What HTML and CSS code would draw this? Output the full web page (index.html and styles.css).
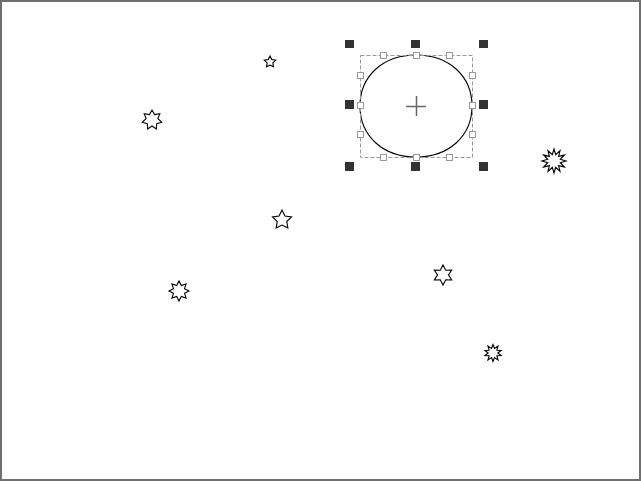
FILE: index.html
```html
<!DOCTYPE html>
<html>
<head>
    <title>Shapes Canvas</title>
    <link rel="stylesheet" href="styles.css">
</head>
<body>
    <div class="canvas-frame">
        <svg class="canvas" id="canvas" width="637" height="477" viewBox="2 2 637 477">
            <!-- selected ellipse -->
            <g class="selection">
                <path class="shape" d="M416 55 C449 55 472 76 472 106 C472 136 449 157 416 157 C383 157 360 136 360 106 C360 76 383 55 416 55 Z"></path>
                <rect class="bounds" x="360.5" y="55.5" width="112" height="102"></rect>
                <g class="point-handles">
                    <rect x="380.5" y="52.5" width="6" height="6"></rect>
                    <rect x="413.5" y="52.5" width="6" height="6"></rect>
                    <rect x="446.5" y="52.5" width="6" height="6"></rect>
                    <rect x="380.5" y="154.5" width="6" height="6"></rect>
                    <rect x="413.5" y="154.5" width="6" height="6"></rect>
                    <rect x="446.5" y="154.5" width="6" height="6"></rect>
                    <rect x="357.5" y="72.5" width="6" height="6"></rect>
                    <rect x="357.5" y="102.5" width="6" height="6"></rect>
                    <rect x="357.5" y="131.5" width="6" height="6"></rect>
                    <rect x="469.5" y="72.5" width="6" height="6"></rect>
                    <rect x="469.5" y="102.5" width="6" height="6"></rect>
                    <rect x="469.5" y="131.5" width="6" height="6"></rect>
                </g>
                <g class="resize-handles">
                    <rect x="345" y="40" width="9" height="8"></rect>
                    <rect x="411" y="40" width="9" height="8"></rect>
                    <rect x="479" y="40" width="9" height="8"></rect>
                    <rect x="345" y="100" width="9" height="9"></rect>
                    <rect x="479" y="100" width="9" height="9"></rect>
                    <rect x="345" y="162" width="9" height="9"></rect>
                    <rect x="411" y="162" width="9" height="9"></rect>
                    <rect x="479" y="162" width="9" height="9"></rect>
                </g>
                <path class="crosshair" d="M406 106.5 H426 M416.5 96 V116"></path>
            </g>
            <g id="stars"></g>
        </svg>
    </div>

    <script src="script.js"></script>
</body>
</html>
```

FILE: styles.css
```css
body {
    margin: 0;
    background-color: #fff;
}

.canvas-frame {
    width: 641px;
    height: 481px;
    box-sizing: border-box;
    border: 2px solid #6f6f6f;
    background-color: #fff;
    overflow: hidden;
}

.canvas {
    display: block;
}

.shape,
.star {
    fill: #fff;
    stroke: #000;
    stroke-width: 1.1;
}

.bounds {
    fill: none;
    stroke: #999;
    stroke-width: 1;
    stroke-dasharray: 4 2;
}

.point-handles rect {
    fill: #fff;
    stroke: #999;
    stroke-width: 1;
}

.resize-handles rect {
    fill: #333;
}

.crosshair {
    fill: none;
    stroke: #666;
    stroke-width: 1.5;
}
```

FILE: script.js
```js
const stars = [
    { x: 270, y: 62, points: 5, outer: 6, inner: 3 },
    { x: 152, y: 120, points: 7, outer: 10, inner: 6 },
    { x: 554, y: 161, points: 12, outer: 12, inner: 6.5 },
    { x: 282, y: 220, points: 5, outer: 10, inner: 5 },
    { x: 179, y: 291, points: 8, outer: 10, inner: 6 },
    { x: 443, y: 275, points: 6, outer: 10, inner: 5.5 },
    { x: 493, y: 353, points: 10, outer: 8.5, inner: 4.8 }
];

function starPoints(star) {
    const pts = [];
    const steps = star.points * 2;
    for (let i = 0; i < steps; i++) {
        const angle = -Math.PI / 2 + (i * Math.PI) / star.points;
        const r = i % 2 === 0 ? star.outer : star.inner;
        pts.push((star.x + r * Math.cos(angle)).toFixed(2) + "," + (star.y + r * Math.sin(angle)).toFixed(2));
    }
    return pts.join(" ");
}

const group = document.getElementById("stars");
for (const star of stars) {
    const poly = document.createElementNS("http://www.w3.org/2000/svg", "polygon");
    poly.setAttribute("class", "star");
    poly.setAttribute("points", starPoints(star));
    group.appendChild(poly);
}
```
